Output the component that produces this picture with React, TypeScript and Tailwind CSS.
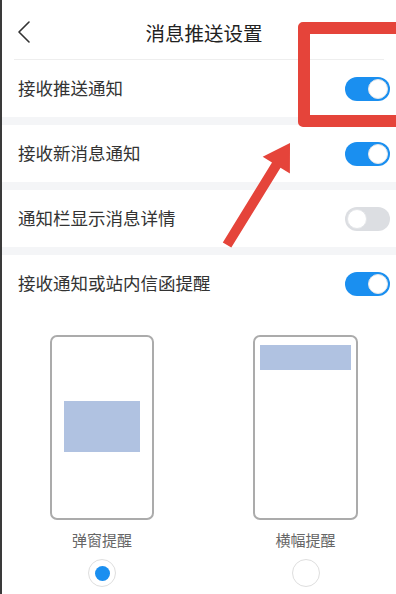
import React, { useState } from "react";

const font = { fontFamily: '"Noto Sans CJK SC", "Noto Sans", sans-serif' };

function Toggle({ on }: { on: boolean }) {
  return (
    <div
      className={`w-[45px] h-[24px] rounded-full flex items-center px-[2px] ${
        on ? "bg-[#1a8ff0] justify-end" : "bg-[#dcdee2] justify-start"
      }`}
    >
      <div className="w-[20px] h-[20px] rounded-full bg-white border border-[#e3e5e8]" />
    </div>
  );
}

function Row({ label, on }: { label: string; on: boolean }) {
  return (
    <div className="h-[57px] flex items-center justify-between pl-[16px] pr-[6px] bg-white">
      <span className="text-[17.5px] text-[#333]">{label}</span>
      <Toggle on={on} />
    </div>
  );
}

function Band() {
  return <div className="h-[8px] bg-[#f4f5f7]" />;
}

function Radio({ checked }: { checked: boolean }) {
  return (
    <div className="w-[28px] h-[28px] rounded-full border border-[#dedede] bg-white flex items-center justify-center">
      {checked && <div className="w-[15px] h-[15px] rounded-full bg-[#1a8ff0]" />}
    </div>
  );
}

export default function App() {
  const [mode] = useState<"popup" | "banner">("popup");

  return (
    <div
      className="relative w-[396px] h-[594px] bg-white overflow-hidden border-l-2 border-[#3a3a3a]"
      style={font}
    >
      {/* header */}
      <div className="h-[60px] flex flex-col">
        <div className="relative h-[59px] flex items-center justify-center">
          <svg
            className="absolute left-[16px] top-[21px]"
            width="14"
            height="22"
            viewBox="0 0 14 22"
            fill="none"
          >
            <polyline
              points="11,1 1,11 11,21"
              stroke="#333"
              strokeWidth="1.6"
              strokeLinecap="round"
              strokeLinejoin="round"
            />
          </svg>
          <span className="text-[19.5px] text-[#222] ml-[10px] mt-[6px]">消息推送设置</span>
        </div>
        <div className="h-px mx-[12px] bg-[#eeeeee]" />
      </div>

      {/* settings */}
      <Row label="接收推送通知" on={true} />
      <Band />
      <Row label="接收新消息通知" on={true} />
      <Band />
      <Row label="通知栏显示消息详情" on={false} />
      <Band />
      <Row label="接收通知或站内信函提醒" on={true} />

      {/* reminder style */}
      <div className="flex pl-[48px] gap-[99px] mt-[23px]">
        <div className="flex flex-col items-center">
          <div className="w-[104px] h-[185px] rounded-[7px] border-2 border-[#ababab] flex items-center justify-center">
            <div className="w-[76px] h-[51px] bg-[#b0c2e1] mb-[2px]" />
          </div>
          <span className="mt-[9px] text-[15px] text-[#666] leading-[22px]">弹窗提醒</span>
          <div className="mt-[8px]">
            <Radio checked={mode === "popup"} />
          </div>
        </div>
        <div className="flex flex-col items-center">
          <div className="w-[105px] h-[185px] rounded-[7px] border-2 border-[#ababab] flex flex-col items-center pt-[8px]">
            <div className="w-[91px] h-[25px] bg-[#b0c2e1]" />
          </div>
          <span className="mt-[9px] text-[15px] text-[#666] leading-[22px]">横幅提醒</span>
          <div className="mt-[8px]">
            <Radio checked={mode === "banner"} />
          </div>
        </div>
      </div>

      {/* annotation overlay */}
      <div className="absolute left-[296px] top-[22px] w-[120px] h-[105px] border-[12px] border-[#e5443a] rounded-[5px]" />
      <svg
        className="absolute left-[-2px] top-0 pointer-events-none"
        width="396"
        height="594"
        viewBox="0 0 396 594"
      >
        <polygon
          points="222.8,242.4 272,162.5 262.7,156.7 290,143 289.9,173.5 280.5,167.7 231.3,247.6"
          fill="#e5443a"
        />
      </svg>
    </div>
  );
}
